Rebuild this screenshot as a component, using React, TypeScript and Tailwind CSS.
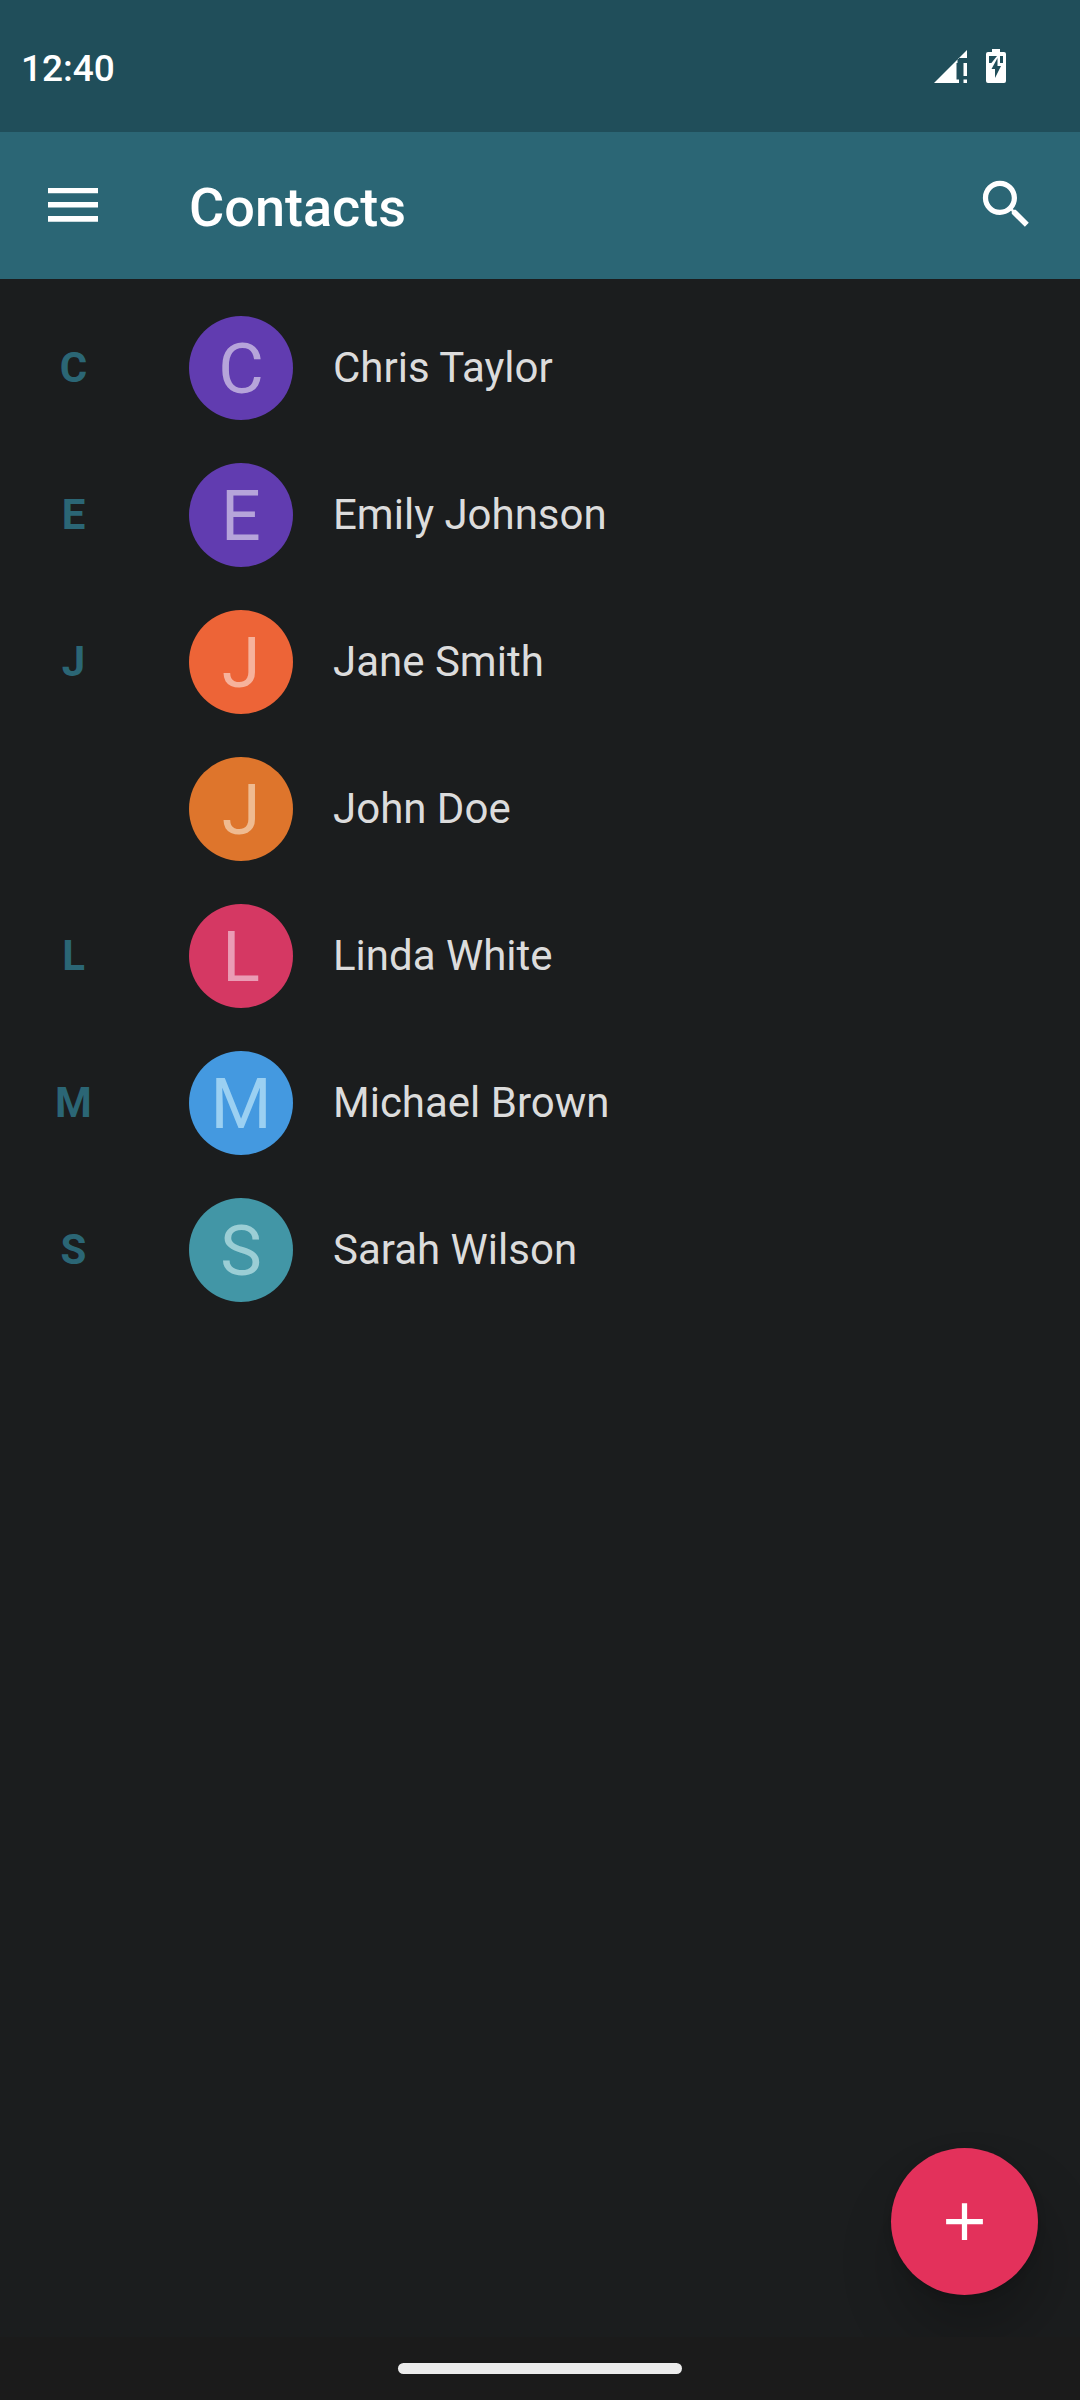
type Contact = {
  section?: string;
  name: string;
  avatar: string;
};

const contacts: Contact[] = [
  { section: 'C', name: 'Chris Taylor', avatar: 'bg-[#613cb0] text-[#b6a4da]' },
  { section: 'E', name: 'Emily Johnson', avatar: 'bg-[#613cb0] text-[#b6a4da]' },
  { section: 'J', name: 'Jane Smith', avatar: 'bg-[#ed6437] text-[#f6b29c]' },
  { name: 'John Doe', avatar: 'bg-[#de752c] text-[#efbb91]' },
  { section: 'L', name: 'Linda White', avatar: 'bg-[#d53863] text-[#ea9cb5]' },
  { section: 'M', name: 'Michael Brown', avatar: 'bg-[#4499e0] text-[#9bd0f2]' },
  { section: 'S', name: 'Sarah Wilson', avatar: 'bg-[#4296a6] text-[#9bced5]' },
];

function SignalIcon() {
  return (
    <svg width="33" height="33" viewBox="0 0 33 33" fill="#fff" aria-hidden="true">
      <path d="M0 33L25 8V9H23.500V13H22.500V29.500H25V33Z" />
      <path d="M25 8L33 0V8Z" />
      <path d="M29.500 13H33V26H29.500ZM29.500 29.500H33V33H29.500Z" />
    </svg>
  );
}

function BatteryIcon() {
  return (
    <svg width="20" height="34" viewBox="0 0 20 34" aria-hidden="true">
      <path
        fill="#fff"
        d="M6 0H14V3H18Q20 3 20 5V32Q20 34 18 34H2Q0 34 0 32V5Q0 3 2 3H6Z"
      />
      <path fill="#204e5a" d="M3 7H17V14H3Z" />
      <path fill="#fff" d="M11 7H14V15H17V17L9 31H7V20H3V17Z" />
      <path fill="#204e5a" d="M11.500 9V17H15L9 29V20H5.500Z" />
    </svg>
  );
}

function StatusBar() {
  return (
    <div className="flex h-[132px] items-center justify-between bg-[#204e5a] pr-[74px] pl-[21px]">
      <time className="pt-[4px] text-[37px] leading-none font-medium text-white">12:40</time>
      <div className="flex items-center gap-[19px]">
        <SignalIcon />
        <BatteryIcon />
      </div>
    </div>
  );
}

function AppBar() {
  return (
    <header className="flex h-[147px] items-center bg-[#2b6675] pr-[42px] pl-[42px]">
      <button type="button" aria-label="Open menu" className="flex w-[147px] items-center">
        <svg width="63" height="63" viewBox="0 0 63 63" fill="#fff" aria-hidden="true">
          <path d="M6 14H56V19.300H6ZM6 28H56V33.500H6ZM6 42H56V47.700H6Z" />
        </svg>
      </button>
      <h1 className="flex-1 pt-[5px] text-[54px] leading-none font-medium text-white">Contacts</h1>
      <button type="button" aria-label="Search">
        <svg width="63" height="63" viewBox="0 0 24 24" fill="#fff" aria-hidden="true">
          <path d="M15.500 13.600h-.79l-.28-.27C15.410 12.190 16 10.710 16 9.100 16 5.510 13.090 2.600 9.500 2.600S3 5.510 3 9.100 5.910 15.600 9.500 15.600c1.610 0 3.090-.59 4.230-1.570l.27.28v.79l5 4.990L20.490 18.600l-4.990-5zm-6 0C7.010 13.600 5 11.590 5 9.100S7.010 4.600 9.500 4.600 14 6.610 14 9.100 11.990 13.600 9.500 13.600z" />
        </svg>
      </button>
    </header>
  );
}

function ContactRow({ section, name, avatar }: Contact) {
  return (
    <li className="flex h-[147px] items-center">
      <span className="w-[147px] text-center text-[42px] leading-none font-bold text-[#2b6675]">
        {section}
      </span>
      <button type="button" className="ml-[42px] flex flex-1 items-center gap-[40px] text-left">
        <span
          className={`flex size-[104px] shrink-0 items-center justify-center rounded-full pt-[2px] text-[70px] leading-none ${avatar}`}
          aria-hidden="true"
        >
          {name[0]}
        </span>
        <span className="text-[42px] leading-none text-[#dcdcdc]">{name}</span>
      </button>
    </li>
  );
}

export default function App() {
  return (
    <div className="flex min-h-screen flex-col bg-[#1b1d1e] font-['Roboto',sans-serif]">
      <StatusBar />
      <AppBar />
      <main className="flex flex-1 flex-col justify-between">
        <ul className="pt-[15px]">
          {contacts.map((contact) => (
            <ContactRow key={contact.name} {...contact} />
          ))}
        </ul>
        <button
          type="button"
          aria-label="Add contact"
          className="mr-[42px] mb-[42px] flex size-[147px] items-center justify-center self-end rounded-full bg-[#e3315b] shadow-[8px_40px_60px_rgba(0,0,0,0.22),0_2px_8px_rgba(0,0,0,0.15)]"
        >
          <svg width="63" height="63" viewBox="0 0 24 24" fill="#fff" aria-hidden="true">
            <path d="M19 13h-6v6h-2v-6H5v-2h6V5h2v6h6v2z" />
          </svg>
        </button>
      </main>
      <footer className="z-10 flex h-[63px] items-center justify-center bg-[#1b1b1b]">
        <div className="h-[11px] w-[284px] rounded-full bg-[#ececec]" />
      </footer>
    </div>
  );
}
